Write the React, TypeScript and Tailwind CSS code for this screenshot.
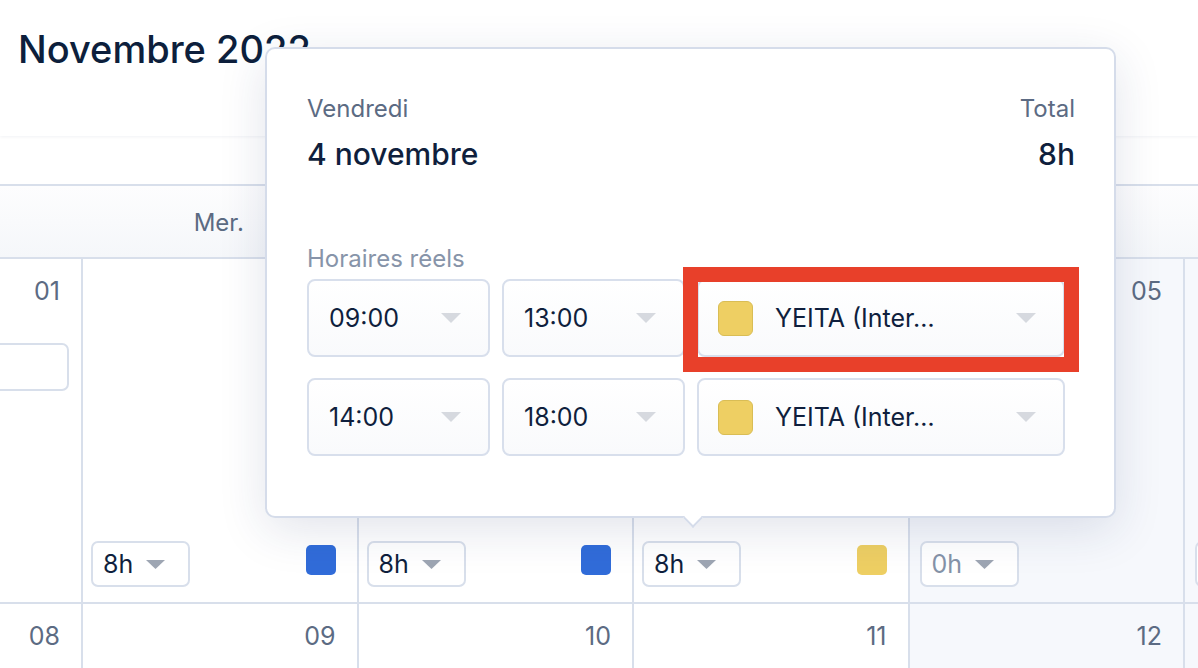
import React from "react";

function Caret({ color, w = 20, h = 10 }: { color: string; w?: number; h?: number }) {
  return (
    <svg width={w} height={h} viewBox={`0 0 ${w} ${h}`} className="shrink-0">
      <polygon points={`0,0 ${w},0 ${w / 2},${h}`} fill={color} />
    </svg>
  );
}

type Cell = {
  n: string;
  hours?: string;
  sq?: string;
  weekend?: boolean;
  holiday?: boolean;
};

const row1: Cell[] = [
  { n: "01", holiday: true },
  { n: "02", hours: "8h", sq: "bg-[#316cd9]" },
  { n: "03", hours: "8h", sq: "bg-[#316cd9]" },
  { n: "04", hours: "8h", sq: "bg-[#eecf63]" },
  { n: "05", hours: "0h", weekend: true },
  { n: "06", hours: "0h", weekend: true },
];

const row2: Cell[] = [
  { n: "08" },
  { n: "09" },
  { n: "10" },
  { n: "11" },
  { n: "12", weekend: true },
  { n: "13", weekend: true },
];

const heads = ["Mar.", "Mer.", "Jeu.", "Ven.", "Sam.", "Dim."];

function DayCell({ c, tall }: { c: Cell; tall: boolean }) {
  return (
    <div
      className={`flex flex-col border-l-2 border-[#d8dfeb] pt-[17px] pb-[15px] pr-[21px] ${
        c.weekend ? "bg-[#f6f8fc] pl-[10px]" : "bg-white pl-[8px]"
      } ${tall ? "h-[343px]" : "h-[200px]"}`}
    >
      <div className="text-right text-[25px] leading-[30px] text-[#5c6b83]">{c.n}</div>
      {c.holiday && (
        <div className="mt-[37px] -mr-[9px] ml-[20px] h-[48px] rounded-[7px] border-2 border-[#d8dfeb] bg-white" />
      )}
      {c.hours && (
        <div className="mt-auto flex items-start justify-between">
          <div className="flex h-[46px] w-[99px] items-center gap-[13px] rounded-[7px] border-2 border-[#d8dfeb] bg-white pl-[10px]">
            <span
              className={`text-[25px] leading-none ${
                c.hours === "0h" ? "text-[#8593a8]" : "text-[#0f1f3d]"
              }`}
            >
              {c.hours}
            </span>
            <Caret color="#9ea6b3" w={19} h={9} />
          </div>
          {c.sq && <div className={`mt-[4px] h-[30px] w-[30px] rounded-[5px] ${c.sq}`} />}
        </div>
      )}
    </div>
  );
}

function SelectBox({ children, w }: { children: React.ReactNode; w: string }) {
  return (
    <div
      className={`flex h-[78px] ${w} items-center justify-between rounded-[8px] border-2 border-[#d8dfec] bg-gradient-to-b from-white to-[#f9fafc] pr-[27px]`}
    >
      {children}
      <Caret color="#d6d9df" w={20} h={10} />
    </div>
  );
}

function Row({ a, b, highlight }: { a: string; b: string; highlight?: boolean }) {
  return (
    <div className="flex gap-[12px]">
      <SelectBox w="w-[183px]">
        <span className="pl-[20px] text-[25px] leading-none text-[#0f1f3d]">{a}</span>
      </SelectBox>
      <SelectBox w="w-[183px]">
        <span className="pl-[20px] text-[25px] leading-none text-[#0f1f3d]">{b}</span>
      </SelectBox>
      <div className="relative">
        <SelectBox w="w-[368px]">
          <div className="flex items-center gap-[22px] pl-[19px]">
            <div className="h-[35px] w-[35px] rounded-[6px] border border-[#d9bd55] bg-[#eecf63]" />
            <span className="text-[25px] leading-none text-[#0f1f3d]">YEITA (Inter…</span>
          </div>
        </SelectBox>
        {highlight && (
          <div className="absolute -left-[14px] -right-[14px] -top-[12px] -bottom-[15px] border-[15px] border-[#e8402a]" />
        )}
      </div>
    </div>
  );
}

export default function App() {
  return (
    <div className="relative h-[668px] w-[1198px] overflow-hidden bg-white font-['Inter',sans-serif]">
      <header className="relative z-10 h-[136px] bg-white pl-[18px] pt-[30px] shadow-[0_1px_3px_rgba(20,40,80,0.06)]">
        <h1 className="text-[38px] font-medium leading-[38px] text-[#0d1f3c]">Novembre 2022</h1>
      </header>
      <div className="h-[50px] border-b-2 border-[#d8dfeb] bg-white" />
      <div className="-ml-[194.5px] w-[1653px]">
        <div className="grid h-[73px] grid-cols-[repeat(6,275.5px)] border-b-2 border-[#d8dfeb] bg-gradient-to-b from-[#fdfdfe] to-[#f5f7fa]">
          {heads.map((h) => (
            <div key={h} className="flex items-center justify-center pt-[3px] text-[24px] text-[#5c6b83]">
              {h}
            </div>
          ))}
        </div>
        <div className="grid grid-cols-[repeat(6,275.5px)] border-b-2 border-[#d8dfeb]">
          {row1.map((c) => (
            <DayCell key={c.n} c={c} tall />
          ))}
        </div>
        <div className="grid grid-cols-[repeat(6,275.5px)]">
          {row2.map((c) => (
            <DayCell key={c.n} c={c} tall={false} />
          ))}
        </div>
      </div>

      {/* Popover */}
      <div className="absolute left-[265px] top-[47px] z-20 h-[471px] w-[851px] rounded-[10px] border-2 border-[#d5dcea] bg-white pl-[40px] pr-[39px] pt-[46px] shadow-[0_12px_48px_rgba(30,50,100,0.13)]">
        <div className="flex justify-between">
          <div>
            <div className="text-[24px] leading-[28px] text-[#5c6b83]">Vendredi</div>
            <div className="mt-[13px] text-[30px] font-medium leading-[36px] text-[#0f1f3d]">4 novembre</div>
          </div>
          <div className="text-right">
            <div className="text-[24px] leading-[28px] text-[#5c6b83]">Total</div>
            <div className="mt-[13px] text-[30px] font-medium leading-[36px] text-[#0f1f3d]">8h</div>
          </div>
        </div>
        <div className="mt-[73px] text-[24px] leading-[28px] text-[#8794a9]">Horaires réels</div>
        <div className="mt-[6px] flex flex-col gap-[21px]">
          <Row a="09:00" b="13:00" highlight />
          <Row a="14:00" b="18:00" />
        </div>
        <div className="absolute -bottom-[9px] left-[419px] h-[14px] w-[14px] rotate-45 border-b-2 border-r-2 border-[#d5dcea] bg-white" />
      </div>
    </div>
  );
}
